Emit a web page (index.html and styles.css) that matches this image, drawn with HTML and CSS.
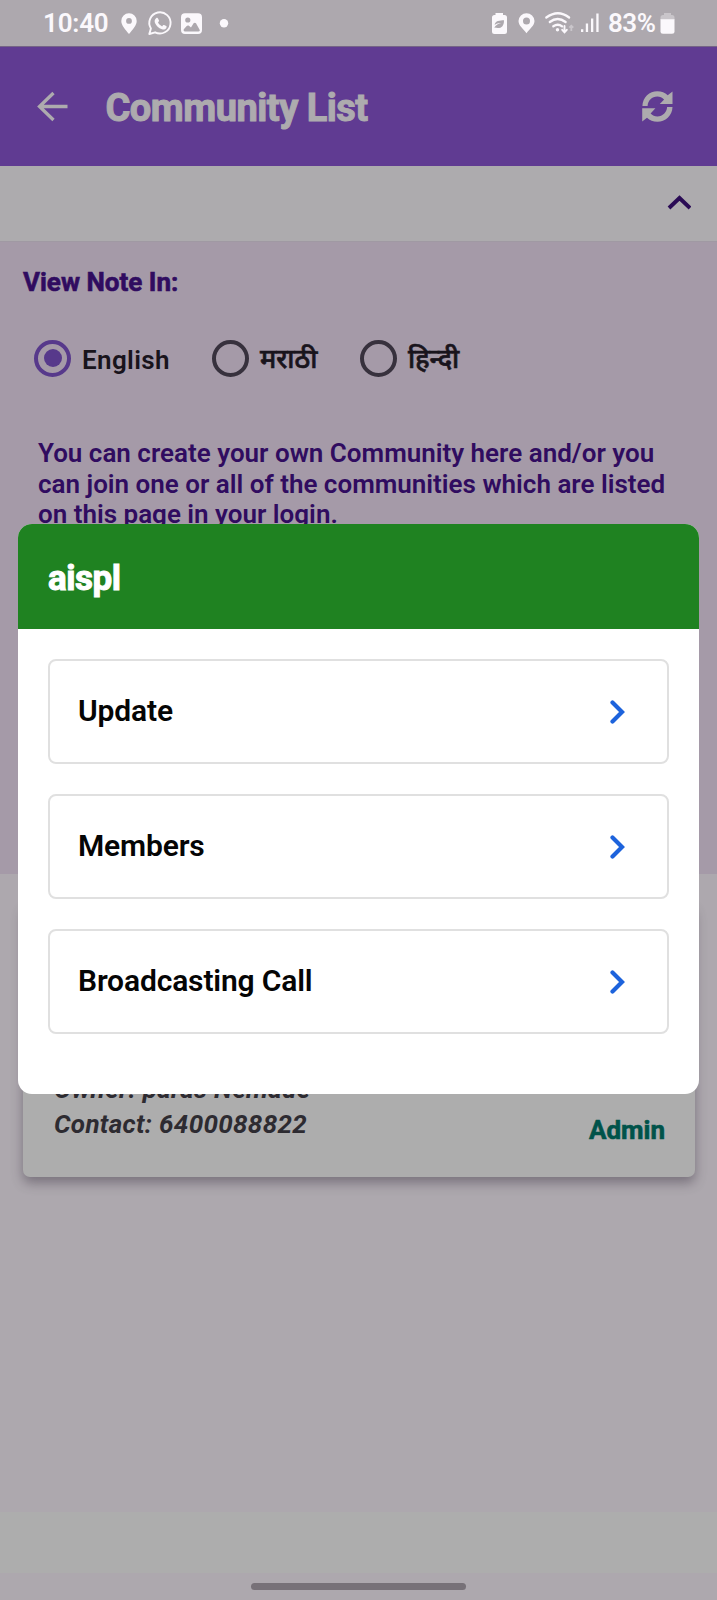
FILE: index.html
```html
<!DOCTYPE html>
<html lang="en">
<head>
<meta charset="utf-8">
<title>Community List</title>
<link rel="stylesheet" href="styles.css">
</head>
<body>
<div class="screen">
  <div class="status">
    <span class="clock">10:40</span>
    <svg class="status-left" width="110" height="46" viewBox="120 0 110 46" fill="#fbf8fc">
      <path fill-rule="evenodd" d="M129 13.3a7.6 7.6 0 0 1 7.7 7.6c0 4.5-4.2 8.7-7.7 13.1-3.500-4.400-7.700-8.600-7.700-13.100a7.600 7.600 0 0 1 7.700-7.600zM129 18a2.900 2.900 0 1 0 0 5.800 2.900 2.900 0 0 0 0-5.800z"/>
      <path d="M149.300 34l1.600-5.600a10.600 10.600 0 1 1 4.200 3.900z" fill="none" stroke="#fbf8fc" stroke-width="1.900" stroke-linejoin="round"/>
      <path d="M156.100 18.300c.6-.6 1.600-.6 1.900.1l1 2.200c.2.500-.1 1-1 2 .9 1.700 2.300 3 4.100 3.800 1-1.200 1.400-1.600 2-1.300l2.100 1c.6.300.5 1.300 0 2.100-.9 1.200-2.600 1.500-4.200 1-3.700-1.300-5.600-3.300-7-6.300-.7-1.700-.3-3.500 1.100-4.600z"/>
      <path fill-rule="evenodd" d="M185 13.200h13a4 4 0 0 1 4 4V30a4 4 0 0 1-4 4h-13a4 4 0 0 1-4-4V17.200a4 4 0 0 1 4-4zm2.800 4.200a2.600 2.600 0 1 0 0 5.200 2.600 2.600 0 0 0 0-5.200zm-4 11.800c-.5.700 0 2.300 1.200 2.300h13.500c1.200 0 1.500-.9 1.100-1.700l-3.600-6.500c-.5-.9-1.800-.9-2.400 0L191 27.500l-2.100-1.700c-.8-.6-1.600-.5-2.200.2z"/>
      <circle cx="224" cy="23.300" r="4.200"/>
    </svg>
    <svg class="status-mid" width="112" height="46" viewBox="489 0 112 46" fill="#fbf8fc">
      <path fill-rule="evenodd" d="M495.500 13h7.500v2h1.500a2.500 2.500 0 0 1 2.500 2.500v14a2.500 2.500 0 0 1-2.500 2.500h-10a2.500 2.500 0 0 1-2.500-2.500v-14a2.500 2.500 0 0 1 2.500-2.500h1zm8.500 7.200c-4 .2-9 .2-9.300 4.800 1.800-1.600 4-2.100 6.500-2-3 .6-5 1.600-7 4.600 6.500 1.600 9.800-.6 9.800-7.400z"/>
      <path fill-rule="evenodd" d="M526.500 13.300a8 8 0 0 1 8 7.800c0 4.400-4.600 7.800-8 12.100-3.400-4.300-8-7.700-8-12.100a8 8 0 0 1 8-7.800zm0 4.300a3.500 3.500 0 1 0 0 7 3.500 3.500 0 0 0 0-7z"/>
      <g fill="none" stroke="#fbf8fc" stroke-width="2.300" stroke-linecap="round"><path d="M546.300 17.500q11.700-8.600 22.800 0M549.800 22q7.800-6 15.800 0M553.300 26.300q4.500-3.200 8.800 0"/><path d="M564.500 26v6m-2.300-2.200 2.300 2.500 2.300-2.500" stroke-width="1.900"/></g>
      <circle cx="557.500" cy="29.800" r="1.700"/>
      <path d="M571.300 31v-5m-2 1.700 2-2 2 2" fill="none" stroke="#c9c5ca" stroke-width="1.800"/>
      <path d="M581 29.200h2.300V32H581zM585.800 23.500h2.300V32h-2.300zM591 18.500h2.300V32H591zM596.300 13.500h2.300V32h-2.300z"/>
    </svg>
    <span class="percent">83%</span>
    <svg class="status-bat" width="15" height="22" viewBox="0 0 15 22"><path d="M4 0h7v2h1a2.500 2.500 0 0 1 2.500 2.500V7H.5V4.500A2.500 2.500 0 0 1 3 2h1z" fill="#c9c5ca"/><path d="M.5 6.300h14v12a2.500 2.500 0 0 1-2.500 2.500H3A2.500 2.500 0 0 1 .5 18.300z" fill="#fbf8fc"/></svg>
  </div>
  <header class="appbar">
    <svg class="back" width="32" height="32" viewBox="0 0 32 32"><path d="M17.500 2 3.500 15.500l14 13.500M3.500 15.500H31.500" fill="none" stroke="#adabae" stroke-width="3.300"/></svg>
    <h1 class="title">Community List</h1>
    <svg class="sync" width="31" height="31" viewBox="0 0 31 31" fill="#adabae">
      <path d="M.4 15C.6 6.200 7.500.2 15.300.2c4.300 0 7.700 1.500 10.400 4L30.500.6V13H17.800l4.300-4.500C20.200 6.600 18 5.600 15.300 5.600c-5.300 0-9.400 4-9.700 9.400z"/>
      <path d="M30.500 16c-.2 8.800-7.300 14.800-15.100 14.800-4.300 0-7.700-1.500-10.400-4L.2 30.400V17.200h13.200l-4.800 5.300c1.900 1.900 4.100 2.900 6.800 2.900 5.300 0 9.400-4 9.700-9.400z"/>
    </svg>
  </header>
  <div class="strip">
    <svg width="24" height="16" viewBox="0 0 24 16"><path d="M2 13 12.500 3 23 13" fill="none" stroke="#2a0b55" stroke-width="3.900"/></svg>
  </div>
  <section class="note">
    <h2 class="note-title">View Note In:</h2>
    <div class="langs">
      <label class="lang"><i class="radio on"></i><span class="en">English</span></label>
      <label class="lang"><i class="radio"></i><span class="mr">मराठी</span></label>
      <label class="lang"><i class="radio"></i><span class="hi">हिन्दी</span></label>
    </div>
    <p class="copy">You can create your own Community here and/or you<br>can join one or all of the communities which are listed<br>on this page in your login.</p>
  </section>
  <main class="list">
    <article class="community">
      <div class="people"><div>Owner: paras Nemade</div><div class="contact">Contact: 6400088822</div></div>
      <div class="role">Admin</div>
    </article>
  </main>
  <div class="bottombar"></div>
  <div class="gesture"><i></i></div>

  <div class="modal">
    <div class="modal-head"><span>aispl</span></div>
    <div class="options">
      <div class="option"><span>Update</span><svg width="15" height="24" viewBox="0 0 15 24"><path d="M2.500 2.500 12 12l-9.500 9.500" fill="none" stroke="#1d63dc" stroke-width="4.200" stroke-linecap="round"/></svg></div>
      <div class="option"><span>Members</span><svg width="15" height="24" viewBox="0 0 15 24"><path d="M2.500 2.500 12 12l-9.500 9.500" fill="none" stroke="#1d63dc" stroke-width="4.200" stroke-linecap="round"/></svg></div>
      <div class="option"><span>Broadcasting Call</span><svg width="15" height="24" viewBox="0 0 15 24"><path d="M2.500 2.500 12 12l-9.500 9.500" fill="none" stroke="#1d63dc" stroke-width="4.200" stroke-linecap="round"/></svg></div>
    </div>
  </div>
</div>
</body>
</html>
```
FILE: styles.css
```css
* { box-sizing: border-box; }
body { margin: 0; font-family: Roboto, "Noto Sans Devanagari", "Noto Sans", sans-serif; }
svg { display: block; flex: none; }
h1, h2, p { margin: 0; }
.screen { position: relative; width: 717px; height: 1600px; display: flex; flex-direction: column; background: #ada8ae; overflow: hidden; white-space: nowrap; }

.status { height: 46px; flex: none; display: flex; align-items: center; padding-left: 43px; color: #fbf8fc; font-size: 26px; font-weight: 600; line-height: 46px; }
.clock { width: 77px; letter-spacing: -0.2px; }
.status-mid { margin-left: 259px; }
.percent { width: 51px; margin-left: 7px; letter-spacing: -0.5px; }
.status-bat { margin-left: 1px; margin-top: 1px; }

.appbar { height: 120px; flex: none; display: flex; align-items: center; padding-left: 36px; background: #603b92; border-top: 1px solid #756486; color: #adabae; }
.title { width: 300px; margin-left: 37.500px; padding-top: 2px; font-size: 38px; font-weight: 700; letter-spacing: -0.5px; -webkit-text-stroke: 1px #adabae; }
.sync { margin-left: 236.500px; }

.strip { height: 75px; flex: none; display: flex; justify-content: flex-end; align-items: center; padding: 0 26px 1px 0; background: #adabae; }

.note { height: 633px; flex: none; padding: 23px 23px; background: #a59aa8; color: #300c60; border-top: 1px solid #a099a3; }
.note-title { font-size: 26px; line-height: 34px; font-weight: 700; -webkit-text-stroke: 0.6px #300c60; }
.langs { display: flex; height: 38px; margin: 40px 0 0 11px; color: #19141c; }
.lang { display: flex; align-items: center; font-size: 26px; font-weight: 500; }
.radio { width: 37px; height: 37px; margin-right: 11px; border: 4px solid #37313d; border-radius: 50%; }
.radio.on { display: grid; place-items: center; border-color: #57398b; }
.radio.on::after { content: ""; width: 18px; height: 18px; border-radius: 50%; background: #57398b; }
.en { width: 130px; padding-top: 4px; font-weight: 600; letter-spacing: 0.35px; }
.mr { width: 100px; }
.mr, .hi { padding-top: 5px; font-size: 26.500px; -webkit-text-stroke: 0.7px #19141c; }
.copy { margin: 61px 0 0 15px; font-size: 26px; line-height: 30.5px; font-weight: 600; }

.list { height: 638px; flex: none; padding: 30px 23px 0; }
.community { width: 672px; height: 273px; display: flex; justify-content: space-between; align-items: flex-end; padding: 0 30px 31px 31px; border-radius: 7px; background: #adadad; box-shadow: 0 6px 12px rgba(60, 52, 66, 0.45); }
.people { color: #2d2b31; font-size: 26px; line-height: 34.5px; font-weight: 700; font-style: italic; letter-spacing: 0.32px; padding-bottom: 5px; }
.role { color: #00534a; font-size: 26px; line-height: 31px; font-weight: 700; -webkit-text-stroke: 0.6px #00534a; }
.bottombar { height: 61px; flex: none; background: #adadad; }
.gesture { flex: 1; display: flex; justify-content: center; padding-top: 10px; }
.gesture i { width: 215px; height: 7px; border-radius: 4px; background: #777178; }

.modal { position: absolute; left: 18px; top: 524px; width: 681px; height: 569.500px; border-radius: 14px; background: #fff; overflow: hidden; }
.modal-head { height: 105px; display: flex; align-items: center; padding: 4px 30px 0; background: #1f8221; color: #fff; font-size: 35px; font-weight: 700; letter-spacing: -0.5px; -webkit-text-stroke: 1px #fff; }
.options { display: flex; flex-direction: column; gap: 30px; padding: 30px; }
.option { height: 105px; display: flex; align-items: center; justify-content: space-between; padding: 0 42px 0 28px; border: 2px solid #e0e0e0; border-radius: 8px; color: #050505; font-size: 30px; font-weight: 600; letter-spacing: -0.15px; }
.option span { padding-bottom: 2px; }
```
